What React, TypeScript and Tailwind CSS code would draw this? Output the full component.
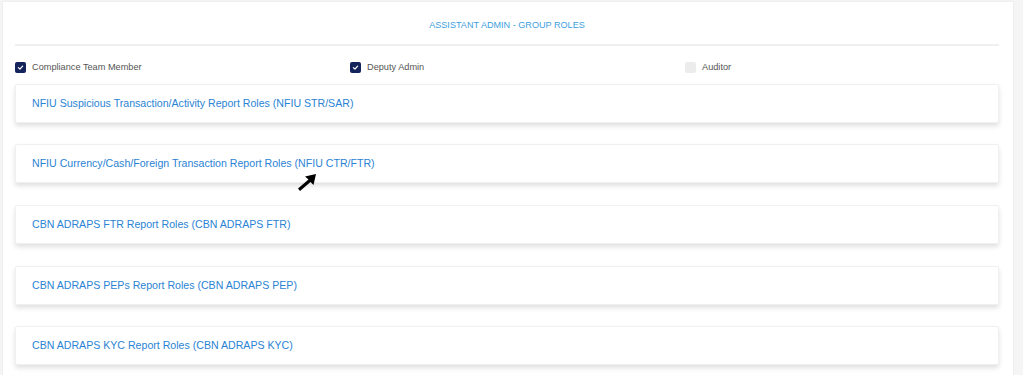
import React from 'react';

const roles = [
  'NFIU Suspicious Transaction/Activity Report Roles (NFIU STR/SAR)',
  'NFIU Currency/Cash/Foreign Transaction Report Roles (NFIU CTR/FTR)',
  'CBN ADRAPS FTR Report Roles (CBN ADRAPS FTR)',
  'CBN ADRAPS PEPs Report Roles (CBN ADRAPS PEP)',
  'CBN ADRAPS KYC Report Roles (CBN ADRAPS KYC)',
];

const groups = [
  { label: 'Compliance Team Member', checked: true },
  { label: 'Deputy Admin', checked: true },
  { label: 'Auditor', checked: false },
];

const Check: React.FC<{ checked: boolean }> = ({ checked }) =>
  checked ? (
    <span className="w-[11px] h-[11px] rounded-[2px] bg-[#14235a] flex items-center justify-center shrink-0">
      <svg width="7" height="7" viewBox="0 0 10 10">
        <path d="M2 5.2 L4.2 7.3 L8 3" fill="none" stroke="white" strokeWidth="1.8" strokeLinecap="round" strokeLinejoin="round" />
      </svg>
    </span>
  ) : (
    <span className="w-[11px] h-[11px] rounded-[2px] bg-[#ececec] shrink-0" />
  );

const App: React.FC = () => {
  return (
    <div className="w-[1023px] h-[375px] overflow-hidden bg-[#f5f5f5] pt-[2px] pl-[3px] font-['Liberation_Sans',Arial,sans-serif]">
      <div className="relative w-[1010px] h-[400px] bg-white shadow-[0_0_2px_rgba(0,0,0,0.08)] pl-[12px] pr-[14px]">
        <div className="h-[42px] flex items-center justify-center pt-[5px]">
          <h2 className="text-[9.1px] text-[#3d9fe0] uppercase">Assistant Admin - Group Roles</h2>
        </div>
        <div className="h-[1.5px] bg-[#f0f0f0]" />
        <div className="h-[38px] grid grid-cols-[335px_335px_1fr] items-center pt-[6px]">
          {groups.map((g) => (
            <label key={g.label} className="flex items-center gap-[6px]">
              <Check checked={g.checked} />
              <span className="text-[9.2px] text-[#555]">{g.label}</span>
            </label>
          ))}
        </div>
        <div className="flex flex-col gap-[21.7px]">
          {roles.map((r) => (
            <div
              key={r}
              className="h-[39px] flex items-center px-[16px] pt-[1px] bg-white border border-[#f0f0f0] rounded-[2px] shadow-[0_3px_5px_rgba(0,0,0,0.12)]"
            >
              <span className="text-[10.6px] text-[#2a83d4]">{r}</span>
            </div>
          ))}
        </div>
        <svg className="absolute left-[294px] top-[171px]" width="20" height="19" viewBox="0 0 20 19">
          <path d="M19 1 L8 3.5 L11.5 6.5 L1 15.5 L3 18 L13.5 9 L16.5 12 Z" fill="black" />
        </svg>
      </div>
    </div>
  );
};

export default App;
